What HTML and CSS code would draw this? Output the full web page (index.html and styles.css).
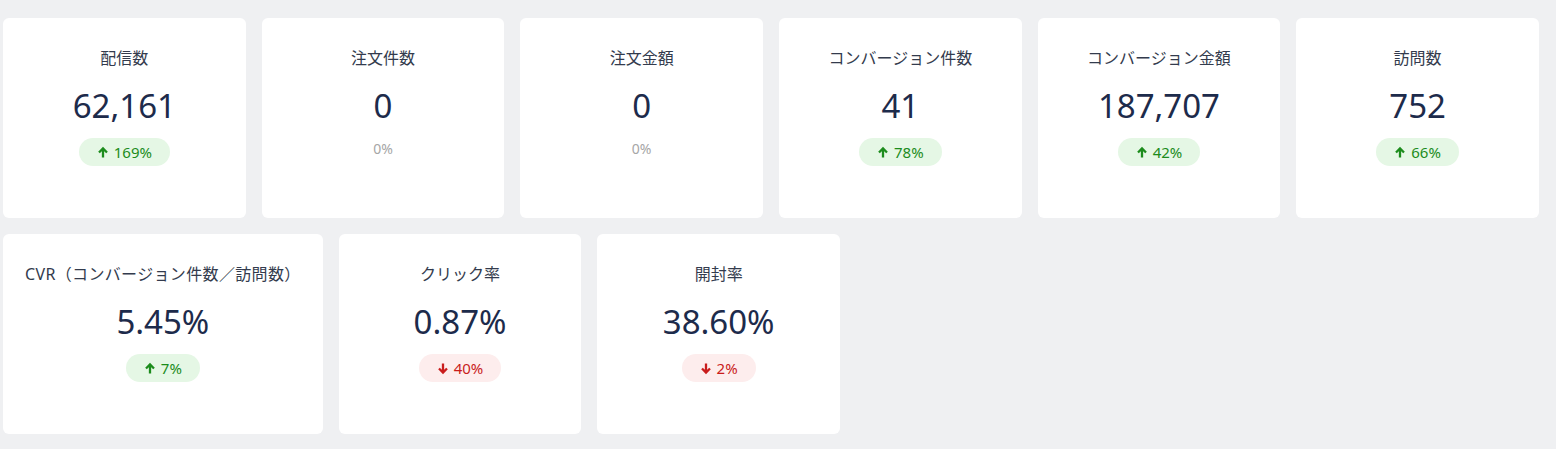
FILE: index.html
```html
<!DOCTYPE html>
<html lang="ja">
<head>
<meta charset="utf-8">
<link rel="stylesheet" href="styles.css">
</head>
<body>
<div class="board">
  <div class="card">
    <div class="title">配信数</div>
    <div class="value">62,161</div>
    <div class="delta up"><svg class="arrow" viewBox="0 0 12 12"><path d="M6 11V2M2 6l4-4 4 4"/></svg>169%</div>
  </div>
  <div class="card">
    <div class="title">注文件数</div>
    <div class="value">0</div>
    <div class="delta none">0%</div>
  </div>
  <div class="card">
    <div class="title">注文金額</div>
    <div class="value">0</div>
    <div class="delta none">0%</div>
  </div>
  <div class="card">
    <div class="title">コンバージョン件数</div>
    <div class="value">41</div>
    <div class="delta up"><svg class="arrow" viewBox="0 0 12 12"><path d="M6 11V2M2 6l4-4 4 4"/></svg>78%</div>
  </div>
  <div class="card">
    <div class="title">コンバージョン金額</div>
    <div class="value">187,707</div>
    <div class="delta up"><svg class="arrow" viewBox="0 0 12 12"><path d="M6 11V2M2 6l4-4 4 4"/></svg>42%</div>
  </div>
  <div class="card">
    <div class="title">訪問数</div>
    <div class="value">752</div>
    <div class="delta up"><svg class="arrow" viewBox="0 0 12 12"><path d="M6 11V2M2 6l4-4 4 4"/></svg>66%</div>
  </div>
  <div class="card">
    <div class="title title-long">CVR（コンバージョン件数／訪問数）</div>
    <div class="value">5.45%</div>
    <div class="delta up"><svg class="arrow" viewBox="0 0 12 12"><path d="M6 11V2M2 6l4-4 4 4"/></svg>7%</div>
  </div>
  <div class="card">
    <div class="title">クリック率</div>
    <div class="value">0.87%</div>
    <div class="delta down"><svg class="arrow" viewBox="0 0 12 12"><path d="M6 1v9M2 6l4 4 4-4"/></svg>40%</div>
  </div>
  <div class="card">
    <div class="title">開封率</div>
    <div class="value">38.60%</div>
    <div class="delta down"><svg class="arrow" viewBox="0 0 12 12"><path d="M6 1v9M2 6l4 4 4-4"/></svg>2%</div>
  </div>
</div>
</body>
</html>
```
FILE: styles.css
```css
html, body {
  margin: 0;
  padding: 0;
  background: #eff0f2;
}
body {
  font-family: "Noto Sans", "Noto Sans CJK JP", sans-serif;
  height: 449px;
  overflow: hidden;
}
.board {
  width: 1536px;
  margin-left: 3px;
  padding-top: 18px;
  display: flex;
  flex-wrap: wrap;
  gap: 16px;
}
.card {
  flex: 0 0 calc((100% - 80px) / 6);
  box-sizing: border-box;
  height: 200px;
  background: #fff;
  border-radius: 6px;
  padding: 29px 22px 0;
  display: flex;
  flex-direction: column;
  align-items: center;
}
.title {
  font-size: 16px;
  line-height: 22px;
  color: #333b4d;
  white-space: nowrap;
}
.title-long {
  letter-spacing: 0.35px;
}
.value {
  margin-top: 16px;
  font-size: 33px;
  line-height: 42px;
  color: #1d2b4b;
}
.delta {
  margin-top: 11px;
  height: 28px;
  padding: 0 18px;
  border-radius: 14px;
  display: flex;
  align-items: center;
  gap: 5px;
  font-size: 15px;
}
.delta.up {
  background: #e5f7e5;
  color: #1c8c1c;
}
.delta.down {
  background: #fdeded;
  color: #c91c1c;
}
.delta.none {
  height: 20px;
  color: #a6a6a6;
  font-size: 14px;
  padding: 0;
}
.arrow {
  width: 12px;
  height: 13px;
  fill: none;
  stroke: currentColor;
  stroke-width: 2.3;
  stroke-linecap: butt;
  stroke-linejoin: miter;
}
```
